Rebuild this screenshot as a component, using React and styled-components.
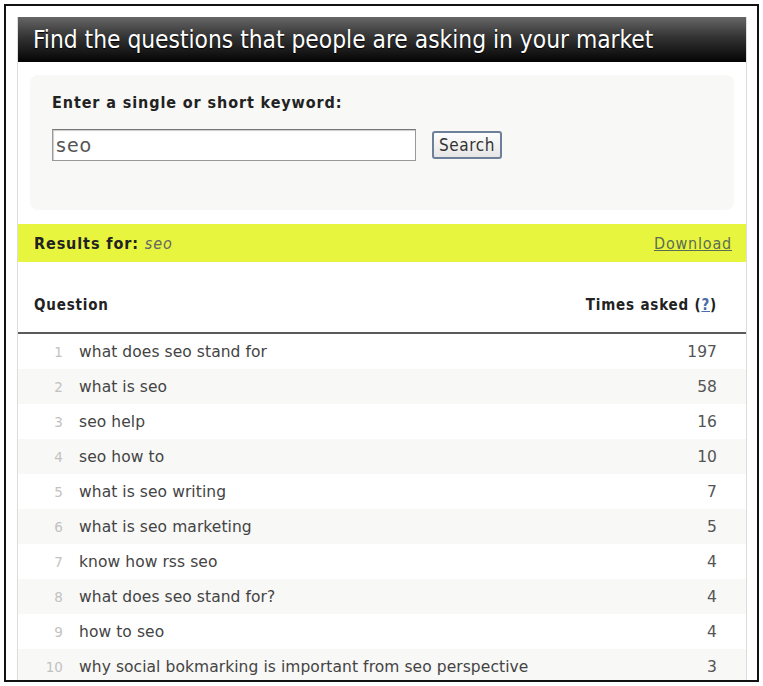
import React from 'react'
import styled, { createGlobalStyle } from 'styled-components'

const GlobalStyle = createGlobalStyle`
  body {
    margin: 0;
    background: #fff;
    font-family: 'DejaVu Sans', Verdana, sans-serif;
  }
`

const Frame = styled.div`
  box-sizing: border-box;
  margin: 4px 0 0 4px;
  width: 755px;
  height: 678px;
  border: 2px solid #111;
  padding: 11px 10px 0 11px;
  overflow: hidden;
`

const Panel = styled.div`
  border: 1px solid #dcdcdc;
  border-top: none;
  background: #fff;
`

const Header = styled.h1`
  margin: 0;
  height: 45px;
  display: flex;
  align-items: center;
  padding-left: 15px;
  background: linear-gradient(#666 0%, #333 45%, #040404 100%);
  color: #fff;
  font-family: 'DejaVu Sans Condensed', 'DejaVu Sans', sans-serif;
  font-weight: normal;
  font-size: 24.3px;
  text-shadow: 0 1px 1px #000;
`

const SearchBox = styled.form`
  margin: 13px 12px 14px 12px;
  padding: 18px 22px 0 22px;
  height: 135px;
  box-sizing: border-box;
  background: #f8f8f6;
  border-radius: 8px;
`

const Label = styled.label`
  display: block;
  font-family: 'DejaVu Sans Condensed', 'DejaVu Sans', sans-serif;
  font-weight: bold;
  font-size: 16px;
  letter-spacing: 0.9px;
  color: #222;
  margin-bottom: 17px;
`

const SearchRow = styled.div`
  display: flex;
  align-items: center;
  gap: 16px;
`

const Input = styled.input`
  box-sizing: border-box;
  width: 364px;
  height: 32px;
  border: 1px solid #999;
  border-top-color: #777;
  box-shadow: inset 1px 1px 1px #ccc;
  padding: 0 3px;
  font-family: 'DejaVu Sans', sans-serif;
  font-size: 19px;
  letter-spacing: 1px;
  color: #555;
  background: #fff;
`

const Button = styled.button`
  box-sizing: border-box;
  height: 28px;
  padding: 0 5px;
  border: 2px solid #6d7f99;
  border-radius: 3px;
  background: linear-gradient(#fdfdfd, #e6e6e6);
  font-family: 'DejaVu Sans Condensed', 'DejaVu Sans', sans-serif;
  font-size: 17px;
  letter-spacing: 0.6px;
  color: #333;
`

const ResultsBar = styled.div`
  height: 38px;
  display: flex;
  align-items: center;
  justify-content: space-between;
  padding: 0 14px 0 16px;
  background: #e8f53e;
  font-family: 'DejaVu Sans Condensed', 'DejaVu Sans', sans-serif;
  font-size: 16px;
  letter-spacing: 0.9px;
`

const ResultsLabel = styled.span`
  font-weight: bold;
  color: #222;
`

const Keyword = styled.em`
  font-weight: normal;
  color: #666;
`

const DownloadLink = styled.a`
  color: #5d6c55;
  text-decoration: underline;
  font-size: 16px;
  letter-spacing: 0.8px;
`

const TableHead = styled.div`
  display: flex;
  justify-content: space-between;
  align-items: flex-end;
  height: 72px;
  box-sizing: border-box;
  padding: 0 29px 18px 16px;
  border-bottom: 2px solid #5a5a5a;
  font-family: 'DejaVu Sans Condensed', 'DejaVu Sans', sans-serif;
  font-weight: bold;
  font-size: 15px;
  letter-spacing: 0.8px;
  color: #222;
`

const HelpLink = styled.a`
  color: #4a6aa8;
  text-decoration: underline;
`

const Row = styled.div`
  display: flex;
  align-items: center;
  height: 35px;
  padding-right: 29px;
  background: ${p => (p.$shade ? '#f8f8f7' : '#fff')};
  font-size: 15.5px;
  letter-spacing: 0.07px;
  color: #444;
`

const RowNum = styled.span`
  width: 45px;
  text-align: right;
  color: #c2c2c2;
  font-size: 13.5px;
  margin-right: 16px;
`

const Question = styled.span`
  flex: 1;
`

const Count = styled.span`
  color: #555;
`

const rows = [
  ['what does seo stand for', 197],
  ['what is seo', 58],
  ['seo help', 16],
  ['seo how to', 10],
  ['what is seo writing', 7],
  ['what is seo marketing', 5],
  ['know how rss seo', 4],
  ['what does seo stand for?', 4],
  ['how to seo', 4],
  ['why social bokmarking is important from seo perspective', 3],
]

export default function App() {
  return (
    <>
      <GlobalStyle />
      <Frame>
        <Panel>
          <Header>Find the questions that people are asking in your market</Header>
          <SearchBox onSubmit={e => e.preventDefault()}>
            <Label htmlFor="kw">Enter a single or short keyword:</Label>
            <SearchRow>
              <Input id="kw" defaultValue="seo" />
              <Button type="submit">Search</Button>
            </SearchRow>
          </SearchBox>
          <ResultsBar>
            <span>
              <ResultsLabel>Results for: </ResultsLabel>
              <Keyword>seo</Keyword>
            </span>
            <DownloadLink href="#">Download</DownloadLink>
          </ResultsBar>
          <TableHead>
            <span>Question</span>
            <span>Times asked (<HelpLink href="#">?</HelpLink>)</span>
          </TableHead>
          {rows.map(([q, n], i) => (
            <Row key={i} $shade={i % 2 === 1}>
              <RowNum>{i + 1}</RowNum>
              <Question>{q}</Question>
              <Count>{n}</Count>
            </Row>
          ))}
        </Panel>
      </Frame>
    </>
  )
}
